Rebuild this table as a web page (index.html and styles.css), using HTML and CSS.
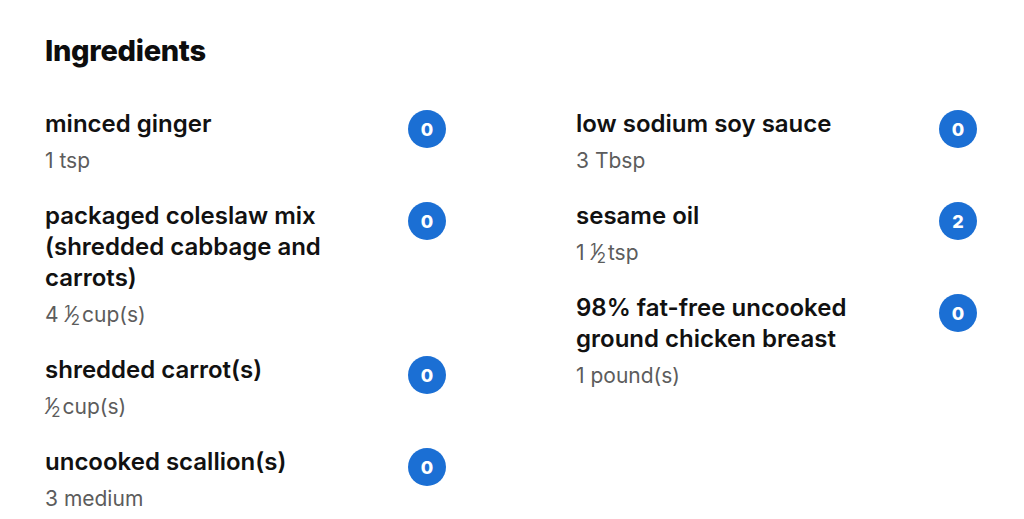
FILE: index.html
```html
<!DOCTYPE html>
<html lang="en">
<head>
<meta charset="utf-8">
<title>Ingredients</title>
<link rel="stylesheet" href="styles.css">
</head>
<body>
<section class="ingredients">
  <h2 class="title">Ingredients</h2>
  <div class="grid">
    <div class="col">
      <div class="item">
        <div class="text"><div class="name">minced ginger</div><div class="amount">1 tsp</div></div>
        <span class="badge">0</span>
      </div>
      <div class="item">
        <div class="text"><div class="name">packaged coleslaw mix (shredded cabbage and carrots)</div><div class="amount">4 <span class="frac"><span class="num">1</span><span class="slash">⁄</span><span class="den">2</span></span>cup(s)</div></div>
        <span class="badge">0</span>
      </div>
      <div class="item">
        <div class="text"><div class="name">shredded carrot(s)</div><div class="amount"><span class="frac"><span class="num">1</span><span class="slash">⁄</span><span class="den">2</span></span>cup(s)</div></div>
        <span class="badge">0</span>
      </div>
      <div class="item">
        <div class="text"><div class="name">uncooked scallion(s)</div><div class="amount">3 medium</div></div>
        <span class="badge">0</span>
      </div>
    </div>
    <div class="col">
      <div class="item">
        <div class="text"><div class="name">low sodium soy sauce</div><div class="amount">3 Tbsp</div></div>
        <span class="badge">0</span>
      </div>
      <div class="item">
        <div class="text"><div class="name">sesame oil</div><div class="amount">1 <span class="frac"><span class="num">1</span><span class="slash">⁄</span><span class="den">2</span></span>tsp</div></div>
        <span class="badge">2</span>
      </div>
      <div class="item">
        <div class="text"><div class="name">98% fat-free uncooked ground chicken breast</div><div class="amount">1 pound(s)</div></div>
        <span class="badge">0</span>
      </div>
    </div>
  </div>
</section>
</body>
</html>
```
FILE: styles.css
```css
html, body {
  margin: 0;
  padding: 0;
  background: #ffffff;
}
body {
  font-family: "Inter", "Liberation Sans", sans-serif;
  color: #111111;
}
.ingredients {
  padding: 34px 0 0 45px;
}
.title {
  margin: 0;
  font-size: 29px;
  line-height: 34px;
  font-weight: 800;
  letter-spacing: -0.3px;
  color: #0d0d0d;
}
.grid {
  margin-top: 40px;
  display: grid;
  grid-template-columns: 401px 401px;
  column-gap: 130px;
}
.col {
  display: flex;
  flex-direction: column;
  gap: 25px;
}
.item {
  display: grid;
  grid-template-columns: 1fr 38px;
  column-gap: 23px;
  align-items: start;
}
.name {
  font-size: 24px;
  line-height: 31px;
  font-weight: 600;
  color: #111111;
}
.amount {
  margin-top: 8px;
  font-size: 21px;
  line-height: 28px;
  font-weight: 400;
  color: #5c5c5c;
}
.frac {
  margin-right: 2px;
  white-space: nowrap;
  line-height: 0;
}
.num {
  font-size: 15px;
  line-height: 0;
  vertical-align: 6px;
}
.slash {
  font-size: 22px;
  line-height: 0;
  margin: 0 -2px;
}
.den {
  font-size: 15px;
  line-height: 0;
  vertical-align: -3px;
}
.badge {
  margin-top: 2px;
  width: 38px;
  height: 38px;
  border-radius: 50%;
  background: #1b6fd4;
  color: #ffffff;
  font-size: 18px;
  font-weight: 800;
  display: flex;
  align-items: center;
  justify-content: center;
}
```
